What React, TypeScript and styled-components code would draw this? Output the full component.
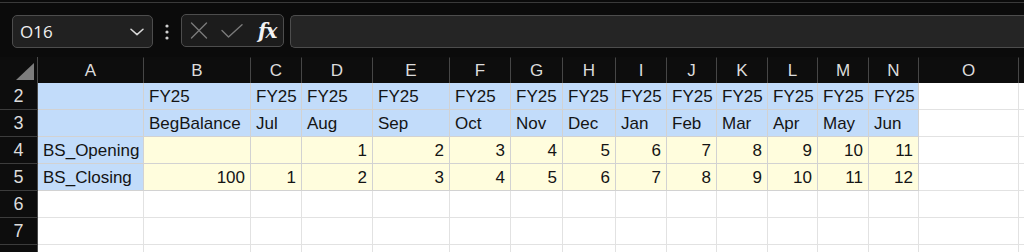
import React from "react";
import styled, { createGlobalStyle } from "styled-components";

const GlobalStyle = createGlobalStyle`
  html, body { margin: 0; padding: 0; background: #0b0b0b; }
  body { font-family: "Liberation Sans", Arial, sans-serif; }
  * { box-sizing: border-box; }
`;

const Page = styled.div`
  width: 1024px;
  height: 252px;
  overflow: hidden;
  background: #0b0b0b;
  display: flex;
  flex-direction: column;
`;

const TopRule = styled.div`
  flex-shrink: 0;
  height: 1px;
  margin-top: 2px;
  background: #3a3a3a;
`;

const Toolbar = styled.div`
  flex-shrink: 0;
  height: 54px;
  display: flex;
  align-items: flex-start;
  padding: 12px 0 0 12px;
`;

const NameBox = styled.div`
  width: 141px;
  height: 33px;
  border: 1px solid #4d4d4d;
  border-radius: 5px;
  background: #212121;
  display: flex;
  align-items: center;
  justify-content: space-between;
  padding: 0 8px 0 7px;
  color: #f0f0f0;
  font-family: "Open Sans", "Liberation Sans", sans-serif;
  font-size: 17px;
`;

const Dots = styled.div`
  width: 28px;
  height: 33px;
  display: flex;
  align-items: center;
  justify-content: center;
`;

const FxBox = styled.div`
  width: 103px;
  height: 33px;
  margin-top: -1px;
  border: 1px solid #4d4d4d;
  border-radius: 5px;
  background: #1c1c1c;
  display: flex;
  align-items: center;
  padding: 0 0 0 8px;
  gap: 13px;
`;

const FxText = styled.span`
  font-family: "DejaVu Serif", "Liberation Serif", serif;
  font-style: italic;
  font-weight: bold;
  font-size: 20px;
  color: #f2f2f2;
  margin-left: 2px;
  letter-spacing: -1px;
`;

const FormulaInput = styled.div`
  flex: 1;
  height: 33px;
  margin-left: 6px;
  border: 1px solid #4d4d4d;
  border-right: none;
  border-radius: 5px 0 0 5px;
  background: #252525;
`;

const cols = [106, 107, 51, 71, 77, 61, 52, 53, 51, 50, 51, 50, 51, 50, 100, 20];

const Sheet = styled.div`
  flex-shrink: 0;
  display: grid;
  grid-template-columns: 38px ${cols.map((c) => `${c}px`).join(" ")};
  grid-template-rows: 26px repeat(7, 27px);
`;

const Corner = styled.div`
  background: #0d0d0d;
  border-right: 1px solid #4a4a4a;
  display: flex;
  align-items: flex-end;
  justify-content: flex-end;
  padding: 0 3px 3px 0;
`;

const ColHead = styled.div`
  background: #0d0d0d;
  border-right: 1px solid #464646;
  border-top: 1px solid #0d0d0d;
  color: #dcdcdc;
  font-size: 17px;
  display: flex;
  align-items: center;
  justify-content: center;
  overflow: hidden;
`;

const RowHead = styled.div`
  background: #0d0d0d;
  border-right: 1px solid #4a4a4a;
  border-bottom: 1px solid #3c3c3c;
  color: #dcdcdc;
  font-size: 18px;
  display: flex;
  align-items: center;
  justify-content: center;
`;

type Fill = "blue" | "yellow" | "white";

const fills: Record<Fill, string> = {
  blue: "#c2dcfa",
  yellow: "#fffddd",
  white: "#ffffff",
};

const Cell = styled.div<{ $fill: Fill; $num?: boolean }>`
  background: ${(p) => fills[p.$fill]};
  border-right: 1px solid ${(p) => (p.$fill === "white" ? "#e2e2e2" : "#d2d2d2")};
  border-bottom: 1px solid ${(p) => (p.$fill === "white" ? "#e2e2e2" : "#d2d2d2")};
  color: #141414;
  font-size: 17px;
  display: flex;
  align-items: center;
  justify-content: ${(p) => (p.$num ? "flex-end" : "flex-start")};
  padding: 1px 5px 0 5px;
  white-space: nowrap;
  overflow: hidden;
`;

const letters = ["A", "B", "C", "D", "E", "F", "G", "H", "I", "J", "K", "L", "M", "N", "O", ""];
const months = ["BegBalance", "Jul", "Aug", "Sep", "Oct", "Nov", "Dec", "Jan", "Feb", "Mar", "Apr", "May", "Jun"];

type CellData = { v: string; fill: Fill; num?: boolean };

function buildRows(): CellData[][] {
  const rows: CellData[][] = [];
  const blank = (fill: Fill): CellData => ({ v: "", fill });
  rows.push([blank("blue"), ...months.map(() => ({ v: "FY25", fill: "blue" as Fill })), blank("white"), blank("white")]);
  rows.push([blank("blue"), ...months.map((m) => ({ v: m, fill: "blue" as Fill })), blank("white"), blank("white")]);
  rows.push([
    { v: "BS_Opening", fill: "blue" },
    blank("yellow"),
    blank("yellow"),
    ...Array.from({ length: 11 }, (_, i) => ({ v: String(i + 1), fill: "yellow" as Fill, num: true })),
    blank("white"),
    blank("white"),
  ]);
  rows.push([
    { v: "BS_Closing", fill: "blue" },
    { v: "100", fill: "yellow", num: true },
    ...Array.from({ length: 12 }, (_, i) => ({ v: String(i + 1), fill: "yellow" as Fill, num: true })),
    blank("white"),
    blank("white"),
  ]);
  for (let r = 0; r < 3; r++) rows.push(Array.from({ length: 16 }, () => blank("white")));
  return rows;
}

const ChevronDown = () => (
  <svg width="14" height="8" viewBox="0 0 14 8" fill="none">
    <path d="M1 1.2 L7 6.6 L13 1.2" stroke="#d8d8d8" strokeWidth="1.5" strokeLinecap="round" strokeLinejoin="round" />
  </svg>
);

const VDots = () => (
  <svg width="4" height="16" viewBox="0 0 4 16">
    <circle cx="2" cy="2" r="1.6" fill="#d0d0d0" />
    <circle cx="2" cy="8" r="1.6" fill="#d0d0d0" />
    <circle cx="2" cy="14" r="1.6" fill="#d0d0d0" />
  </svg>
);

const CrossIcon = () => (
  <svg width="18" height="17" viewBox="0 0 18 17" fill="none">
    <path d="M1.5 1 L16.5 16 M16.5 1 L1.5 16" stroke="#7a7a7a" strokeWidth="1.4" strokeLinecap="round" />
  </svg>
);

const CheckIcon = () => (
  <svg width="22" height="14" viewBox="0 0 22 14" fill="none">
    <path d="M1 6.5 L7.5 13 L21 0.8" stroke="#7a7a7a" strokeWidth="1.4" strokeLinecap="round" strokeLinejoin="round" />
  </svg>
);

const CornerTriangle = () => (
  <svg width="18" height="17" viewBox="0 0 18 17">
    <polygon points="18,0 18,17 0,17" fill="#7d7d7d" />
  </svg>
);

export default function App() {
  const rows = buildRows();
  return (
    <Page>
      <GlobalStyle />
      <TopRule />
      <Toolbar>
        <NameBox>
          <span>O16</span>
          <ChevronDown />
        </NameBox>
        <Dots>
          <VDots />
        </Dots>
        <FxBox>
          <CrossIcon />
          <CheckIcon />
          <FxText>fx</FxText>
        </FxBox>
        <FormulaInput />
      </Toolbar>
      <Sheet>
        <Corner>
          <CornerTriangle />
        </Corner>
        {letters.map((l, i) => (
          <ColHead key={`h${i}`}>{l}</ColHead>
        ))}
        {rows.map((row, r) => (
          <React.Fragment key={`r${r}`}>
            <RowHead>{r + 2 <= 7 ? r + 2 : ""}</RowHead>
            {row.map((c, ci) => (
              <Cell key={`c${r}-${ci}`} $fill={c.fill} $num={c.num}>
                {c.v}
              </Cell>
            ))}
          </React.Fragment>
        ))}
      </Sheet>
    </Page>
  );
}
